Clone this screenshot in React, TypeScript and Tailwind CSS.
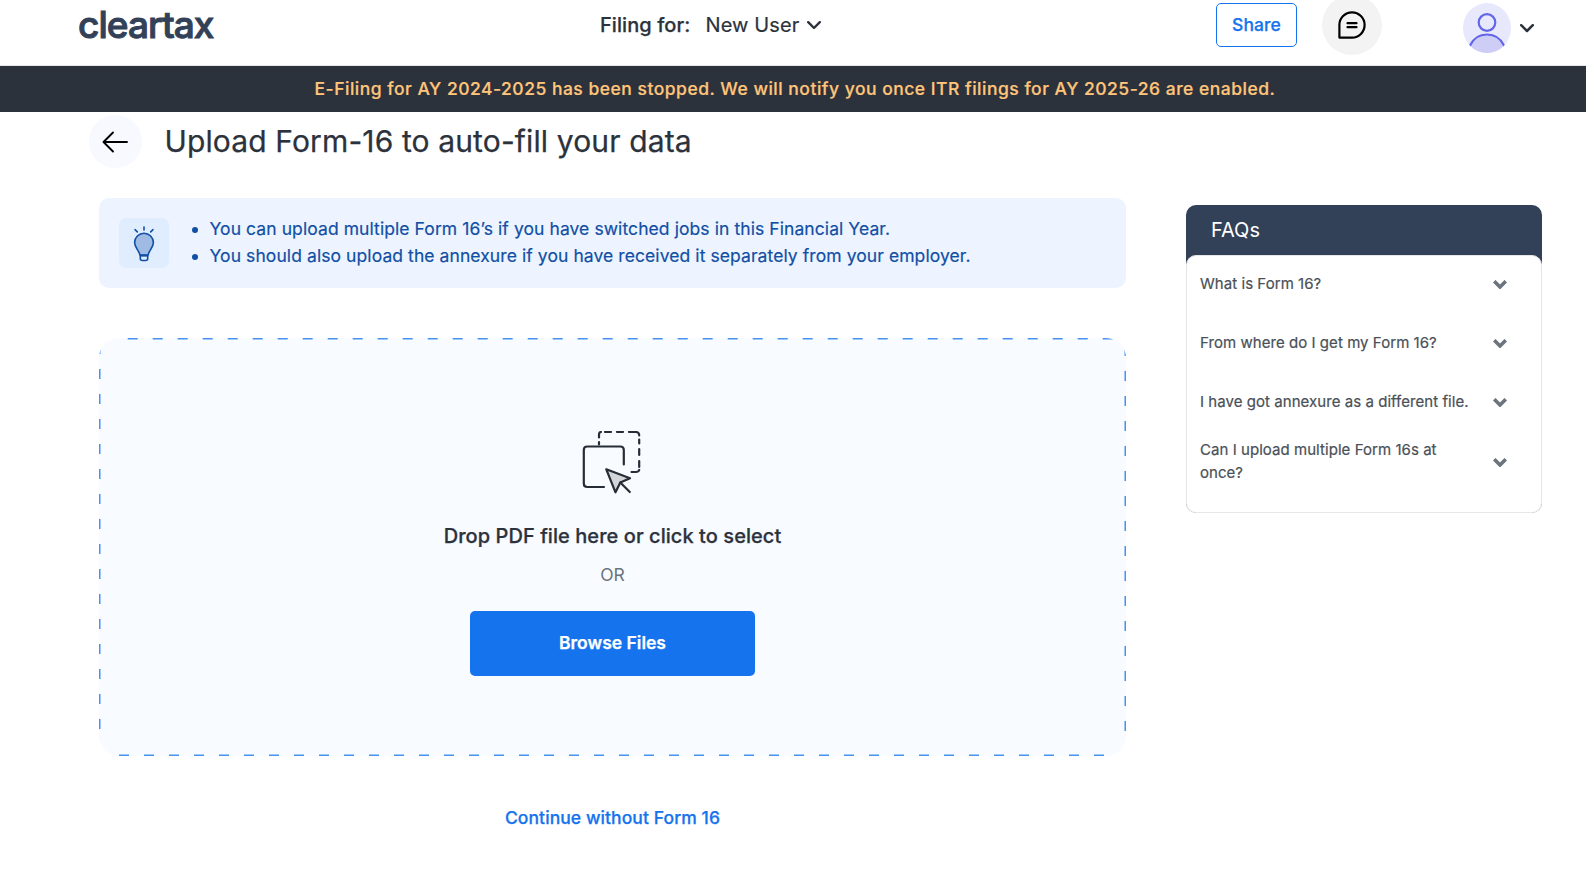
import React from "react";

const faqs = [
  "What is Form 16?",
  "From where do I get my Form 16?",
  "I have got annexure as a different file.",
  "Can I upload multiple Form 16s at once?",
];

function Chevron({ className, width = 2 }: { className: string; width?: number }) {
  return (
    <svg viewBox="0 0 14 9" fill="none" stroke="currentColor" strokeWidth={width} className={className}>
      <path d="M1.2 1.2 7 7l5.8-5.8" strokeLinecap={width > 2.6 ? "butt" : "round"} strokeLinejoin={width > 2.6 ? "miter" : "round"} />
    </svg>
  );
}

function Header() {
  return (
    <header className="flex h-[66px] items-start border-b border-[#e4e7ea] bg-white">
      <div className="ml-[78px] w-[522px] text-[37px] leading-[50px] font-medium tracking-[-0.95px] text-[#324158] [-webkit-text-stroke:1px_#324158]">
        cleartax
      </div>
      <div className="flex h-[50px] w-[616px] items-center text-[20px] text-[#2c323c]">
        <span className="font-medium tracking-[0.08px] [-webkit-text-stroke:0.25px_#2c323c]">Filing for:</span>
        <span className="ml-[15px] tracking-[0.1px] [-webkit-text-stroke:0.2px_#2c323c]">New User</span>
        <Chevron className="ml-[8px] h-[9px] w-[14px]" width={2.4} />
      </div>
      <button className="mt-[3px] h-[44px] w-[81px] rounded-[5px] border border-[#1673ee] text-[17.5px] font-medium tracking-[0.1px] text-[#1673ee] [-webkit-text-stroke:0.25px_#1673ee]">
        Share
      </button>
      <div className="-mt-[5px] ml-[25px] flex size-[60px] items-center justify-center rounded-full bg-[#f3f3f3]">
        <svg viewBox="0 0 28 28" className="size-7" fill="none" stroke="#000" strokeWidth="2.2" strokeLinecap="round" strokeLinejoin="round">
          <path d="M1.4 26.6V14A12.6 12.6 0 1 1 14 26.6Z" />
          <path d="M9.5 12.2h9M9.5 16.2h9" />
        </svg>
      </div>
      <svg viewBox="0 0 48 50" className="mt-[3px] ml-[81px] h-[50px] w-[48px]" fill="none">
        <clipPath id="avatar">
          <ellipse cx="24" cy="25" rx="24" ry="25" />
        </clipPath>
        <g clipPath="url(#avatar)">
          <rect width="48" height="50" fill="#e8e8fc" />
          <path d="M7 42.5C10.5 35 16.5 31.5 24 31.5S37.5 35 41 42.5V50H7Z" fill="#cdcdf5" />
          <path d="M7 42.5C10.5 35 16.5 31.5 24 31.5S37.5 35 41 42.5" stroke="#6366e8" strokeWidth="2.2" strokeLinecap="round" />
          <circle cx="24" cy="19.5" r="8.3" stroke="#6366e8" strokeWidth="2.2" />
        </g>
      </svg>
      <Chevron className="mt-[24px] ml-[9px] h-[9px] w-[14px] text-[#2c323c]" width={2.5} />
    </header>
  );
}

function BulbIcon() {
  return (
    <svg viewBox="0 0 50 50" className="size-[50px]" fill="none" stroke="#114fa5" strokeWidth="1.6" strokeLinecap="round" strokeLinejoin="round">
      <path d="M25 9v3M16 11.7l2.3 2.2M34 11.7l-2.3 2.2" />
      <path d="M21 37 20 34.5C18.5 31 15.6 28.5 15.6 24.6a9.4 9.4 0 0 1 18.8 0c0 3.9-2.9 6.4-4.4 9.9L29 37Z" fill="#a0bbe3" />
      <path d="M21.3 37.5h7.4v3q0 2-2 2h-3.4q-2 0-2-2Z" fill="#e0edff" />
      <path d="M21.5 37.8h7" />
    </svg>
  );
}

function DropIcon() {
  return (
    <svg viewBox="0 0 60 64" className="h-[64px] w-[60px]" fill="none" stroke="#272d36" strokeWidth="2.2" strokeLinecap="round" strokeLinejoin="round">
      <path d="M41.8 33.5V19q0-3.5-3.5-3.5H5.3Q1.8 15.5 1.8 19V52.5Q1.8 56 5.3 56H22" />
      <path d="M17 13.5v-2.500M17 6.5V4Q17 1 19 1M23 1h6M35 1h6M47 1h6.500Q57.200 1 57.200 4.500M57.200 8.500v4M57.200 18v6M57.200 30v6M57.200 39Q56.500 41 54 41H49.500" />
      <path d="M24.300 38.300 48 47.300 38.300 51.500 33.500 61.300Z" fill="#d3d5d9" />
      <path d="m38.300 51.500 9.500 9.500" />
    </svg>
  );
}

function DropZone() {
  return (
    <section className="relative mt-[50px] flex h-[418px] flex-col items-center overflow-hidden rounded-[20px] bg-[#f8fbff]">
      <svg className="absolute inset-0 h-full w-full" viewBox="0 0 1027 418" fill="none" stroke="#4592f3" strokeWidth="3" strokeDasharray="10 15">
        <path d="M28.7 0H1027" />
        <path d="M20 418H1027" />
        <path d="M0 6V400" />
        <path d="M1027 8V400" />
      </svg>
      <div className="mt-[93px] mr-[1px] flex">
        <DropIcon />
      </div>
      <p className="mt-[26px] text-[20px] leading-[30px] font-medium tracking-[0.06px] text-[#2c323c] [-webkit-text-stroke:0.25px_#2c323c]">Drop PDF file here or click to select</p>
      <p className="mt-[11px] text-[17.5px] leading-[26px] text-[#6c747e]">OR</p>
      <button className="mt-[23px] h-[65px] w-[285px] rounded-[5px] bg-[#1673ee] text-[17.5px] font-semibold text-white [-webkit-text-stroke:0.25px_white]">
        Browse Files
      </button>
    </section>
  );
}

function Faqs() {
  return (
    <aside className="mt-[37px] h-[308px] w-[356px] overflow-hidden rounded-[10px] bg-[linear-gradient(#324158_0_60px,#a8adb5_60px)]">
      <h2 className="h-[50px] pl-[25px] text-[20px] leading-[50px] text-white">FAQs</h2>
      <ul className="h-[258px] rounded-[10px] border border-[#e6e7e9] bg-white">
        {faqs.map((q) => (
          <li key={q} className="flex h-[59.2px] items-center pl-[13px]">
            <span className="mr-[18.5px] w-[274px] pb-[5px] text-[15px] leading-[23px] tracking-[0.05px] text-[#495057] [-webkit-text-stroke:0.2px_#495057]">{q}</span>
            <Chevron className="mb-[2px] h-[9px] w-[14px] text-[#6c757d]" width={3.6} />
          </li>
        ))}
      </ul>
    </aside>
  );
}

export default function App() {
  return (
    <div className="h-[876px] w-[1586px] overflow-hidden bg-white font-['Inter',sans-serif]">
      <Header />
      <div className="h-[46px] bg-[#2c323c] pl-[4px] text-center text-[17.5px] leading-[46px] font-medium tracking-[0.5px] text-[#ffc57a] [-webkit-text-stroke:0.2px_#ffc57a]">
        E-Filing for AY 2024-2025 has been stopped. We will notify you once ITR filings for AY 2025-26 are enabled.
      </div>
      <div className="mt-[3px] ml-[89px] flex h-[53px] items-center">
        <button className="flex size-[53px] items-center justify-center rounded-full bg-[#f8f8ff]">
          <svg viewBox="0 0 26 22" className="mr-[1px] h-[22px] w-[26px]" fill="none" stroke="#000" strokeWidth="1.9" strokeLinecap="round" strokeLinejoin="round">
            <path d="M25 11H1.5M11 1.5 1.5 11l9.5 9.5" />
          </svg>
        </button>
        <h1 className="ml-[22.5px] text-[30px] tracking-[0.13px] text-[#2c323c] [-webkit-text-stroke:0.25px_#2c323c]">Upload Form-16 to auto-fill your data</h1>
      </div>
      <main className="ml-[99px] flex gap-[60px]">
        <div className="w-[1027px] pt-[30px]">
          <div className="flex h-[90px] items-center rounded-[10px] bg-[#edf4ff] pl-[20px]">
            <div className="size-[50px] rounded-[7px] bg-[#e0edff]">
              <BulbIcon />
            </div>
            <ul className="mb-[2px] ml-[40.5px] list-disc text-[17.5px] leading-[27px] tracking-[0.08px] text-[#114fa5] [-webkit-text-stroke:0.2px_#114fa5]">
              <li>You can upload multiple Form 16’s if you have switched jobs in this Financial Year.</li>
              <li>You should also upload the annexure if you have received it separately from your employer.</li>
            </ul>
          </div>
          <DropZone />
          <div className="mt-[49px] text-center text-[17.5px] leading-[26px] font-medium tracking-[0.08px] text-[#1673ee] [-webkit-text-stroke:0.25px_#1673ee]">Continue without Form 16</div>
        </div>
        <Faqs />
      </main>
    </div>
  );
}
